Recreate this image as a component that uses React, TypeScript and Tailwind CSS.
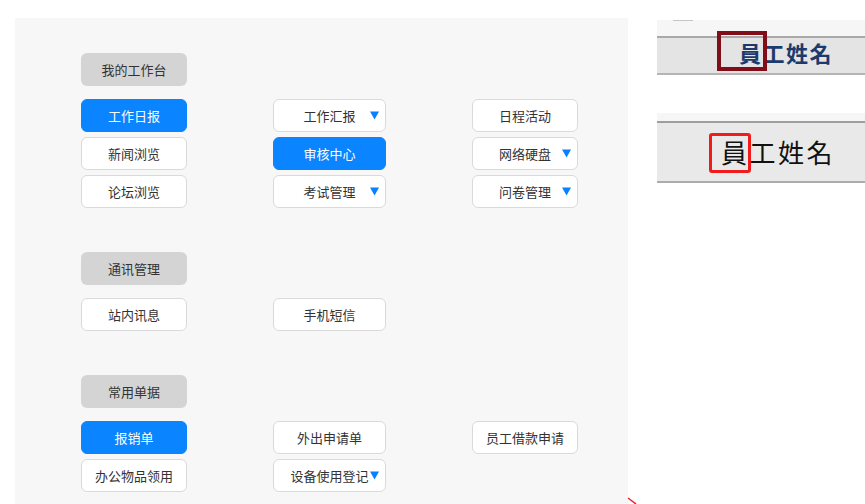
import React from "react";

type Item = { label: string; active?: boolean; drop?: boolean } | null;

const sections: { title: string; items: Item[] }[] = [
  {
    title: "我的工作台",
    items: [
      { label: "工作日报", active: true },
      { label: "工作汇报", drop: true },
      { label: "日程活动" },
      { label: "新闻浏览" },
      { label: "审核中心", active: true },
      { label: "网络硬盘", drop: true },
      { label: "论坛浏览" },
      { label: "考试管理", drop: true },
      { label: "问卷管理", drop: true },
    ],
  },
  {
    title: "通讯管理",
    items: [{ label: "站内讯息" }, { label: "手机短信" }],
  },
  {
    title: "常用单据",
    items: [
      { label: "报销单", active: true },
      { label: "外出申请单" },
      { label: "员工借款申请" },
      { label: "办公物品领用" },
      { label: "设备使用登记", drop: true },
    ],
  },
];

const font = { fontFamily: '"Noto Sans CJK SC", "Noto Sans", sans-serif' };

function Caret() {
  return (
    <svg
      className="absolute right-[6px] top-[11px]"
      width="9"
      height="9"
      viewBox="0 0 9 9"
    >
      <path d="M0 0.5 H9 L4.5 8.5 Z" fill="#0a7fff" />
    </svg>
  );
}

function Tile({ item }: { item: NonNullable<Item> }) {
  return (
    <div
      className={
        "relative flex h-[33px] items-center justify-center rounded-[6px] border text-[13px] " +
        (item.active
          ? "border-[#0a84ff] bg-[#0a84ff] text-white"
          : "border-[#dadada] bg-white text-[#333]")
      }
    >
      <span>{item.label}</span>
      {item.drop && <Caret />}
    </div>
  );
}

function Section({ title, items, first }: { title: string; items: Item[]; first?: boolean }) {
  return (
    <div className={first ? "" : "mt-[44px]"}>
      <div className="flex h-[33px] w-[106px] items-center justify-center rounded-[6px] bg-[#d4d4d4] text-[13px] text-[#333]">
        {title}
      </div>
      <div className="mt-[13px] grid grid-cols-[106px_113px_106px] gap-x-[86px] gap-y-[5px]">
        {items.map((it, i) => (it ? <Tile key={i} item={it} /> : <div key={i} />))}
      </div>
    </div>
  );
}

export default function App() {
  return (
    <div className="relative flex h-[504px] w-[865px] overflow-hidden bg-white" style={font}>
      <div className="ml-[15px] mt-[18px] h-[486px] w-[613px] bg-[#f7f7f7] pl-[66px] pt-[35px]">
        {sections.map((s, i) => (
          <Section key={s.title} title={s.title} items={s.items} first={i === 0} />
        ))}
      </div>

      <div className="ml-[29px] w-[208px]">
        <div className="mt-[20px] h-[16px] bg-[#f6f6f6] pl-[16px]">
          <div className="h-[1px] w-[20px] bg-[#c4c4c4]" />
        </div>
        <div className="h-[2px] bg-[#a9a9a9]" />
        <div className="relative flex h-[35px] items-center bg-[#e4e4e4] pb-[8px] pl-[82px]">
          <span
            className="text-[22px] font-bold leading-none tracking-[1.5px] text-[#1d3a6c]"
            style={{ fontFamily: '"Noto Sans CJK TC", sans-serif' }}
          >
            員工姓名
          </span>
          <div className="absolute left-[60px] top-[-7px] h-[40px] w-[50px] border-[4px] border-[#800d17]" />
        </div>
        <div className="h-[2px] bg-[#b5b5b5]" />

        <div className="mt-[38px] h-[8px] bg-[#f6f6f6]" />
        <div className="h-[2px] bg-[#9e9e9e]" />
        <div className="relative flex h-[58px] items-center bg-[#e9e9e9] pl-[64px]">
          <span
            className="text-[26px] leading-none tracking-[2.5px] text-[#111]"
            style={{ fontFamily: '"Noto Sans CJK TC", sans-serif' }}
          >
            員工姓名
          </span>
          <div className="absolute left-[52px] top-[10px] h-[40px] w-[42px] rounded-[3px] border-[3px] border-[#f01c1c]" />
        </div>
        <div className="h-[2px] bg-[#ababab]" />
      </div>

      <svg className="absolute left-[627px] top-[497px]" width="12" height="8" viewBox="0 0 12 8">
        <path d="M1 1 L9 7" stroke="#ee2020" strokeWidth="1.5" />
      </svg>
    </div>
  );
}
